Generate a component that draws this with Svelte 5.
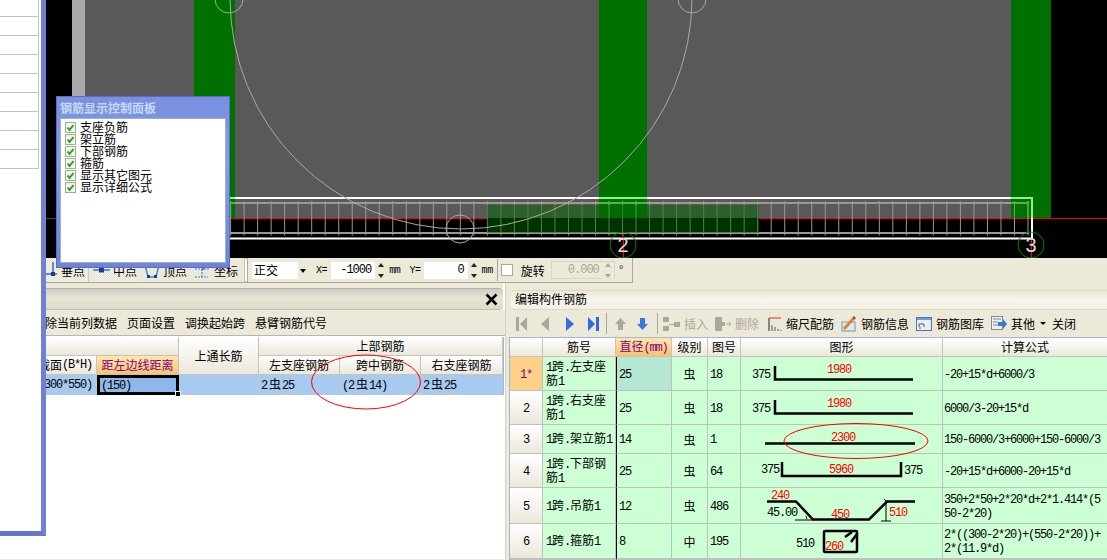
<script>
  const stirrups = Array.from({ length: 60 }, (_, i) => 230.6 + i * 13.515);
  const checks = ['支座负筋', '架立筋', '下部钢筋', '箍筋', '显示其它图元', '显示详细公式'];
  const sideRows = [17, 19, 19, 19, 19, 19, 19, 19, 19];
  const rows = [
    { k: '1*', name: '1跨.左支座筋1', d: '25', g: '虫', no: '18', f: '-20+15*d+6000/3', top: 357, h: 33 },
    { k: '2', name: '1跨.右支座筋1', d: '25', g: '虫', no: '18', f: '6000/3-20+15*d', top: 391, h: 33 },
    { k: '3', name: '1跨.架立筋1', d: '14', g: '虫', no: '1', f: '150-6000/3+6000+150-6000/3', top: 425, h: 28 },
    { k: '4', name: '1跨.下部钢筋1', d: '25', g: '虫', no: '64', f: '-20+15*d+6000-20+15*d', top: 454, h: 33 },
    { k: '5', name: '1跨.吊筋1', d: '12', g: '虫', no: '486', f: '350+2*50+2*20*d+2*1.414*(550-2*20)', top: 488, h: 35 },
    { k: '6', name: '1跨.箍筋1', d: '8', g: '中', no: '195', f: '2*((300-2*20)+(550-2*20))+2*(11.9*d)', top: 524, h: 34 }
  ];
  const runs = (s) => s.split(/([\x00-\x7f]+)/).filter(Boolean).map((text) => ({ text, latin: /^[\x00-\x7f]/.test(text) }));
</script>

{#snippet t(s)}{#each runs(s) as r}{#if r.latin}<span class="l">{r.text}</span>{:else}{r.text}{/if}{/each}{/snippet}

{#snippet figure(n)}
  {#if n === '1*' || n === '2'}
    {@const o = n === '2' ? 34 : 0}
    <polyline class="bar" points="775,{366 + o} 775,{379.5 + o} 913,{379.5 + o}" />
    <text class="lb" x="752" y={378 + o}>375</text>
    <text class="lb red" x="827" y={373 + o}>1980</text>
  {:else if n === '3'}
    <line class="bar" x1="765" y1="443.5" x2="915" y2="443.5" />
    <text class="lb red" x="831" y="441">2300</text>
  {:else if n === '4'}
    <polyline class="bar" points="782,462 782,476 901,476 901,462" />
    <text class="lb" x="761" y="473">375</text>
    <text class="lb red" x="829" y="473">5960</text>
    <text class="lb" x="904" y="474">375</text>
  {:else if n === '5'}
    <polyline class="bar" points="767,501.5 796,501.5 813,519.5 869,519.5 887,501.5 915,501.5" />
    <line class="thin" x1="795" y1="520" x2="813" y2="520" />
    <line class="thin" x1="806" y1="516" x2="807" y2="519" />
    <line class="thin" x1="886" y1="500" x2="886" y2="521" />
    <line class="thin" x1="881" y1="521" x2="891" y2="521" />
    <line class="thin" x1="884" y1="499" x2="888" y2="503" />
    <text class="lb red" x="771" y="499">240</text>
    <text class="lb" x="767" y="516">45.00</text>
    <text class="lb red" x="831" y="518">450</text>
    <text class="lb red" x="889" y="516">510</text>
  {:else}
    <rect class="bar" x="824" y="531" width="33" height="21" rx="1" />
    <line class="bar" x1="845" y1="537" x2="852" y2="532" />
    <line class="bar" x1="851" y1="542" x2="857" y2="534" />
    <text class="lb" x="796" y="547">510</text>
    <text class="lb red" x="825" y="550">260</text>
  {/if}
{/snippet}

<div class="root">
  <aside class="side">
    {#each sideRows as h}<div class="side-row" style="height:{h}px"></div>{/each}
  </aside>

  <main class="main">
    <div class="canvas-wrap">
      <svg class="canvas" viewBox="46 0 1061 258" width="1061" height="258">
        <defs>
          <clipPath id="cols">
            <rect x="230" y="0" width="5" height="218" />
            <rect x="599" y="0" width="48" height="218" />
            <rect x="1011" y="0" width="40" height="218" />
          </clipPath>
          <g id="stir">
            <line x1="230" y1="203" x2="1029" y2="203" stroke-width="2" />
            <line x1="230" y1="233" x2="1029" y2="233" stroke-width="2" />
            {#each stirrups as x}<line x1={x} y1="201" x2={x} y2="235.5" stroke-width="1" />{/each}
          </g>
          <path id="wh" d="M230 198H1032V238.5H230" fill="none" stroke-width="2" />
        </defs>
        <rect x="46" y="0" width="1061" height="258" fill="#000" />
        <rect x="72" y="0" width="13" height="218" fill="#a9a9a9" />
        <rect x="85" y="0" width="926" height="218" fill="#595959" />
        <rect x="194" y="0" width="41" height="218" fill="#007000" />
        <rect x="599" y="0" width="48" height="218" fill="#007000" />
        <rect x="1011" y="0" width="40" height="218" fill="#007000" />
        <line x1="46" y1="218.5" x2="60" y2="218.5" stroke="#007000" />
        <line x1="230" y1="218.5" x2="487" y2="218.5" stroke="#ff0000" />
        <line x1="759" y1="218.5" x2="1107" y2="218.5" stroke="#ff0000" />
        <use href="#wh" stroke="#fff" />
        <use href="#stir" stroke="#a09890" />
        <g clip-path="url(#cols)">
          <use href="#wh" stroke="#7dfc7d" />
          <use href="#stir" stroke="#5fa85f" />
        </g>
        <rect x="487" y="205" width="272" height="28" fill="#006600" opacity="0.5" />
        <g fill="none" stroke="#a8a8a8">
          <circle cx="461" cy="-2" r="231" />
          <circle cx="229" cy="-1" r="14" />
          <circle cx="692" cy="-1" r="14" />
          <circle cx="460" cy="229" r="14" />
        </g>
        <line x1="623.5" y1="235" x2="623.5" y2="258" stroke="#ff0000" />
        <line x1="1031.5" y1="240" x2="1031.5" y2="258" stroke="#ff0000" />
        <circle cx="623" cy="245" r="13" fill="none" stroke="#008000" />
        <circle cx="1031" cy="245" r="13" fill="none" stroke="#008000" />
        <text class="axis" x="623" y="252">2</text>
        <text class="axis" x="1031" y="252">3</text>
      </svg>

      <section class="float">
        <h2>钢筋显示控制面板</h2>
        <ul>
          {#each checks as c}
            <li>
              <svg width="11" height="11" viewBox="0 0 11 11"><rect x=".5" y=".5" width="10" height="10" fill="#f4f4ee" stroke="#a9a99a" /><path d="M2.5 5.5 4.5 8 8.5 3" fill="none" stroke="#1ba81b" stroke-width="2" /></svg>
              <span>{c}</span>
            </li>
          {/each}
        </ul>
      </section>
    </div>

    <div class="tools-top">
      <div class="tb">
        <div class="snap">
          <span class="tool first">
            <svg width="13" height="22" viewBox="0 0 13 22"><path d="M7 3v12M0 15h11" stroke="#2f6cc9" stroke-width="1.5" fill="none" /><rect x="5" y="13" width="4" height="4" fill="#123f9c" /></svg>
            垂点
          </span>
          <span class="tool sel">
            <svg width="17" height="22" viewBox="0 0 17 22"><path d="M0 11h17" stroke="#5b93d8" stroke-width="2" /><rect x="6" y="8.500" width="5" height="5" fill="#123f9c" /></svg>
            中点
          </span>
          <span class="tool">
            <svg width="16" height="22" viewBox="0 0 16 22"><path d="M1 6 4 18h8l3-12" fill="none" stroke="#4a86d4" stroke-width="1.500" /><rect x="3" y="16" width="3" height="3" fill="#123f9c" /><rect x="10" y="16" width="3" height="3" fill="#123f9c" /></svg>
            顶点
          </span>
          <span class="tool last">
            <svg width="16" height="22" viewBox="0 0 16 22"><path d="M1 10h14M8 4v15M1 18h13" fill="none" stroke="#2f8fd4" stroke-width="1.200" stroke-dasharray="2 1" /><path d="M8 11 14 5" stroke="#2f6cc9" stroke-width="1.500" /></svg>
            坐标
          </span>
        </div>
        <span class="grip"></span>
        <span class="select">正交<span class="drop"><i></i></span></span>
        <span class="lab x">X=</span>
        <span class="num n1">-1000</span>
        <span class="spin"><i class="up"></i><i class="dn"></i></span>
        <span class="lab">mm</span>
        <span class="lab y">Y=</span>
        <span class="num n2">0</span>
        <span class="spin"><i class="up"></i><i class="dn"></i></span>
        <span class="lab">mm</span>
        <span class="vsep"></span>
        <span class="box"></span>
        <span class="rot">旋转</span>
        <span class="dis"><span class="disn">0.000</span><span class="spin g"><i class="up"></i><i class="dn"></i></span></span>
        <span class="deg">°</span>
      </div>
    </div>

    <div class="lower">
      <section class="left">
        <div class="title-l"><svg class="close" width="13" height="13" viewBox="0 0 13 13"><path d="M1.500 1.500 11.500 11.500M11.500 1.500 1.500 11.500" stroke="#000" stroke-width="2.600" /></svg></div>
        <div class="bar-l">
          <span class="clipstart">除当前列数据</span><span>页面设置</span><span>调换起始跨</span><span>悬臂钢筋代号</span>
        </div>
        <table class="grid gl">
          <colgroup><col class="c51" /><col class="c82" /><col class="c80" /><col class="c81" /><col class="c81" /><col class="c82" /></colgroup>
          <thead>
            <tr class="h1"><th colspan="2" class="blank"></th><th rowspan="2">上通长筋</th><th colspan="3">上部钢筋</th></tr>
            <tr class="h1">
              <th><div class="end">{@render t('截面(B*H)')}</div></th>
              <th class="hot">距左边线距离</th>
              <th>左支座钢筋</th><th>跨中钢筋</th><th>右支座钢筋</th>
            </tr>
          </thead>
          <tbody>
            <tr class="sel-row">
              <td><div class="end">{@render t('(300*550)')}</div></td>
              <td class="cur">{@render t('(150)')}<i class="handle"></i></td>
              <td></td>
              <td class="pl">{@render t('2')}<span class="sym">虫</span>{@render t('25')}</td>
              <td class="pl">{@render t('(2')}<span class="sym">虫</span>{@render t('14)')}</td>
              <td class="pl">{@render t('2')}<span class="sym">虫</span>{@render t('25')}</td>
            </tr>
          </tbody>
        </table>
        <svg class="oval o1" width="112" height="58" viewBox="0 0 112 58"><ellipse cx="56" cy="29" rx="54.500" ry="27" fill="none" stroke="#ff0000" /></svg>
      </section>

      <section class="right">
        <div class="title-r">编辑构件钢筋</div>
        <div class="bar-r">
          <svg class="ic a" width="11" height="16" viewBox="0 0 11 16"><path d="M0 1h3v14H0zM11 1v14L4 8z" fill="#a8a89c" /></svg>
          <svg class="ic b" width="8" height="16" viewBox="0 0 8 16"><path d="M8 1v14L0 8z" fill="#a8a89c" /></svg>
          <svg class="ic c" width="8" height="16" viewBox="0 0 8 16"><path d="M0 1v14l8-7z" fill="#2f6ce0" /></svg>
          <svg class="ic d" width="11" height="16" viewBox="0 0 11 16"><path d="M8 1h3v14H8zM0 1v14l7-7z" fill="#2f6ce0" /></svg>
          <span class="rsep s1"></span>
          <svg class="ic e" width="11" height="12" viewBox="0 0 11 12"><path d="M5.500 0 11 6H8v6H3V6H0z" fill="#a8a89c" /></svg>
          <svg class="ic f" width="11" height="12" viewBox="0 0 11 12"><path d="M5.500 12 11 6H8V0H3v6H0z" fill="#3a78e0" /></svg>
          <span class="rsep s2"></span>
          <svg class="ic g1" width="17" height="16" viewBox="0 0 17 16"><path d="M0 1h6v5H0zM0 10h6v5H0zM6 8h5V6h6v5h-6V9H6z" fill="#aaa99c" /></svg>
          <span class="off t1">插入</span>
          <svg class="ic g2" width="17" height="16" viewBox="0 0 17 16"><path d="M0 1h7v5h3v4H7v5H0z" fill="#aaa99c" /><path d="M11 8h5M14 6l2 2-2 2" stroke="#aaa99c" fill="none" /></svg>
          <span class="off t2">删除</span>
          <svg class="ic g3" width="14" height="16" viewBox="0 0 14 16"><path d="M1 2v13" stroke="#222" /><path d="M1 2h12" stroke="#c33" /><path d="M4 15V9M7 15v-4M10 15v-2M13 15v-1" stroke="#555" /></svg>
          <span class="t3">缩尺配筋</span>
          <svg class="ic g4" width="16" height="16" viewBox="0 0 16 16"><rect x="1" y="6" width="13" height="9" fill="#dfe8f4" stroke="#7f90a8" /><path d="M3 13 12 3" stroke="#d08a30" stroke-width="3" /><path d="M12 3l2-2" stroke="#c04040" stroke-width="3" /></svg>
          <span class="t4">钢筋信息</span>
          <svg class="ic g5" width="16" height="14" viewBox="0 0 16 14"><rect x=".5" y=".5" width="15" height="13" fill="#e8eef6" stroke="#4a78b0" /><rect x="1" y="1" width="14" height="2" fill="#6f9fd0" /><path d="M3 7h5M3 7v3M8 7v3M3 11h2" stroke="#555" fill="none" /></svg>
          <span class="t4">钢筋图库</span>
          <svg class="ic g5" width="16" height="15" viewBox="0 0 16 15"><rect x=".5" y=".5" width="11" height="13" fill="#f0f0f0" stroke="#7a8aa0" /><path d="M2 3h8M2 6h5M2 9h5" stroke="#7a8aa0" /><path d="M7 6h5V3l4 5-4 5v-3H7z" fill="#3a78d8" /></svg>
          <span class="t5">其他</span>
          <i class="caret"></i>
          <span class="t6">关闭</span>
        </div>

        <table class="grid gr">
          <colgroup><col class="r33" /><col class="r73" /><col class="r56" /><col class="r36" /><col class="r33w" /><col class="r201" /><col class="r165" /></colgroup>
          <thead>
            <tr class="h2">
              <th></th><th>筋号</th><th class="hot">直径{@render t('(mm)')}</th><th>级别</th><th>图号</th><th>图形</th><th>计算公式</th>
            </tr>
          </thead>
          <tbody>
            {#each rows as r, i}
              <tr style="height:{r.h + 1}px">
                <td class="rh" class:rh-on={i === 0}>{@render t(r.k)}</td>
                <td class="nm">{@render t(r.name)}</td>
                <td class="dm" class:dm-on={i === 0}>{@render t(r.d)}</td>
                <td class="ct">{r.g}</td>
                <td class="pl">{@render t(r.no)}</td>
                <td class="fg"><svg width="200" height={r.h} viewBox="741 {r.top} 200 {r.h}">{@render figure(r.k)}</svg></td>
                <td class="fm">{@render t(r.f)}</td>
              </tr>
            {/each}
            <tr><td class="rh"></td><td class="nm"></td><td class="dm"></td><td></td><td></td><td></td><td></td></tr>
          </tbody>
        </table>
        <svg class="oval o2" width="148" height="38" viewBox="0 0 148 38"><ellipse cx="74" cy="19" rx="72" ry="17.500" fill="none" stroke="#ff0000" /></svg>
      </section>
    </div>
  </main>
</div>

<style>
  :global(body) { margin: 0; }
  .root {
    display: flex; width: 1107px; height: 560px; overflow: hidden; color: #000;
    background: linear-gradient(#fff 559px, #ece9d8 0);
    font: 12px/13px "Noto Sans CJK SC", "Liberation Sans", sans-serif;
  }
  .l { font-family: "Liberation Mono", monospace; letter-spacing: -1.2px; }

  .side { box-sizing: border-box; width: 46px; height: 536px; flex: none; background: #fff; border-right: 5px solid #6f80d6; border-bottom: 5px solid #6677cf; }
  .side-row { box-sizing: border-box; width: 39px; background: #fff; border-right: 1px solid #c4c4bc; border-bottom: 1px solid #c4c4bc; }

  .main { display: flex; flex-direction: column; width: 1061px; flex: none; }
  .canvas-wrap { position: relative; height: 258px; flex: none; }
  .canvas { display: block; }
  .axis { fill: #dcdcdc; font: 20px "Liberation Sans", sans-serif; text-anchor: middle; }

  .float {
    position: absolute; left: 10px; top: 96px; box-sizing: border-box; width: 174px; height: 172px; padding: 0 3px 4px;
    display: flex; flex-direction: column; border: 1px solid #5a6cc8;
    background: linear-gradient(#7b8fe0, #7f9fe6 40%, #7083d8);
  }
  .float h2 { margin: 0; height: 21px; line-height: 22px; font-size: 12px; font-weight: bold; color: #c9d8f7; flex: none; }
  .float ul { list-style: none; flex: 1; margin: 0; padding: 2px 0 0 4px; background: #fff; border: 1px solid #9fb0c6; }
  .float li { display: flex; align-items: center; gap: 4px; height: 12px; line-height: 12px; }
  .float li svg { flex: none; }

  .tools-top { height: 25px; flex: none; background: #ece9d8; }
  .tb {
    display: flex; align-items: center; box-sizing: border-box; width: 587px; height: 25px;
    border-bottom: 1px solid #aca899; border-right: 1px solid #aca899; background: #ece9d8;
  }
  .snap { display: flex; align-items: center; height: 24px; width: 193px; flex: none; }
  .tool { display: flex; align-items: center; gap: 3px; margin-right: 7px; flex: none; white-space: nowrap; }
  .tool.first { gap: 2px; padding-right: 3px; margin-right: 4px; height: 24px; border-right: 1px solid #cfccbb; box-sizing: border-box; width: 43px; background: repeating-conic-gradient(#f5f4ec 0 25%, #e6e3d2 0 50%) 0 0 / 2px 2px; }
  .tool.sel { height: 24px; background: repeating-conic-gradient(#f5f4ec 0 25%, #e6e3d2 0 50%) 0 0 / 2px 2px; }
  .tool.last { gap: 4px; margin-right: 0; }
  .grip { width: 2px; height: 22px; margin: 0 4px 0 5px; border: 1px solid #c5c2b0; border-right-color: #aca899; flex: none; background: #fff; box-sizing: content-box; }
  .select { position: relative; box-sizing: border-box; display: block; width: 55px; height: 17px; padding-left: 2px; line-height: 16px; background: #fff; flex: none; }
  .drop { position: absolute; right: 0; top: 0; width: 9px; height: 17px; background: #ece9d8; }
  .drop i { position: absolute; left: 2px; top: 7px; border: 3px solid transparent; border-top: 4px solid #000; border-bottom: 0; }
  .lab { font: 10px/17px "Liberation Mono", monospace; letter-spacing: -.4px; flex: none; margin-left: 2px; }
  .x { margin-left: 9px; margin-right: 4px; }
  .y { margin-left: 9px; margin-right: 3px; }
  .num { box-sizing: border-box; display: block; height: 17px; padding-right: 4px; background: #fff; text-align: right; font: 12px/16px "Liberation Mono", monospace; letter-spacing: -1px; flex: none; }
  .n1 { width: 44px; }
  .n2 { width: 44px; }
  .spin { position: relative; width: 12px; height: 17px; background: #ece9d8; flex: none; display: block; }
  .spin i { position: absolute; left: 3px; border: 3px solid transparent; }
  .spin .up { top: 1px; border-top: 0; border-bottom: 4px solid #222; }
  .spin .dn { bottom: 1px; border-bottom: 0; border-top: 4px solid #222; }
  .spin.g .up { border-bottom-color: #aca899; }
  .spin.g .dn { border-top-color: #aca899; }
  .vsep { width: 1px; height: 22px; background: #aca899; margin: 0 3px 0 4px; flex: none; }
  .box { box-sizing: border-box; width: 12px; height: 12px; background: #fff; border: 1px solid #aca899; flex: none; }
  .rot { margin: 0 6px 0 8px; flex: none; }
  .dis { display: flex; align-items: center; box-sizing: border-box; width: 64px; height: 18px; border: 1px solid #d8d5c4; flex: none; }
  .disn { flex: 1; text-align: right; padding-right: 3px; font: 12px/16px "Liberation Mono", monospace; letter-spacing: -1px; color: #aca899; }
  .deg { margin-left: 4px; font: 12px/12px "Liberation Sans", sans-serif; color: #333; }

  .lower { position: relative; display: flex; flex: 1; min-height: 0; background: #ece9d8; }
  .left { position: relative; box-sizing: border-box; width: 459px; height: 277px; flex: none; background: #fff; border-right: 2px solid #fff; border-bottom: 1px solid #ece9d8; }
  .left::before { content: ""; display: block; height: 5px; background: #ece9d8; }
  .title-l {
    position: relative; box-sizing: border-box; width: 457px; height: 22px;
    background: linear-gradient(#cfcdc6, #e7e4d6 45%, #dedbca); border-top: 1px solid #b5b2a5; border-bottom: 1px solid #c2c0b3; border-radius: 0 4px 4px 0;
  }
  .close { position: absolute; right: 5px; top: 4px; }
  .bar-l { box-sizing: border-box; display: flex; gap: 10px; height: 26px; padding-top: 6px; width: 459px; overflow: hidden; background: #ece9d8; border-bottom: 1px solid #b3b6bb; white-space: nowrap; }
  .clipstart { margin-left: -1px; }
  .grid { table-layout: fixed; border-collapse: separate; border-spacing: 0; }
  .gl { width: 457px; margin-top: 1px; border-right: 1px solid #9fb8d8; }
  .c51 { width: 51px; } .c82 { width: 82px; } .c80 { width: 80px; } .c81 { width: 81px; }
  th { padding: 0; font-weight: normal; overflow: hidden; white-space: nowrap; box-sizing: border-box; border-right: 1px solid #c8c5b8; border-bottom: 1px solid #c8c5b8; background: linear-gradient(#fff, #ebe8da); }
  td { padding: 0; box-sizing: border-box; border-right: 1px solid #c0c0c0; border-bottom: 1px solid #c0c0c0; overflow: hidden; }
  .h1 { height: 19px; line-height: 12px; }
  .blank { border-right: 1px solid #c8c5b8; }
  th.hot { background: linear-gradient(#fce6b0, #f6c272); color: #800080; }
  .end { display: flex; justify-content: flex-end; white-space: nowrap; padding-right: 4px; }
  .sel-row { height: 20px; line-height: 12px; background: #a6caf0; }
  .sel-row td { border-color: #bcc8d4; }
  .pl { padding-left: 2px; white-space: nowrap; }
  .sym { margin: 0 1px 0 2px; }
  td.cur { position: relative; overflow: visible; box-sizing: border-box; height: 20px; padding-left: 1px; background: #8fb8ea; border: 3px solid #000; }
  .handle { position: absolute; right: -5px; bottom: -5px; width: 4px; height: 4px; background: #000; border: 1px solid #fff; }
  .oval { position: absolute; pointer-events: none; }
  .o1 { left: 264px; top: 70px; }

  .right { position: relative; flex: 1; min-width: 0; box-sizing: border-box; padding-left: 1px; background: #ece9d8; border-left: 1px solid #d6d3c2; }
  .title-r {
    box-sizing: border-box; height: 20px; margin: 7px 0 0 4px; padding: 1px 0 0 4px;
    background: linear-gradient(#ece9d8, #f8f6ee 50%, #f2efe2); border-radius: 4px 0 0 4px; border-top: 1px solid #ddd9c6; border-bottom: 1px solid #ddd9c6;
  }
  .bar-r { display: flex; align-items: center; height: 27px; box-sizing: border-box; white-space: nowrap; padding-left: 9px; }
  .ic { flex: none; }
  .b { margin-left: 14px; } .c { margin-left: 17px; } .d { margin-left: 14px; }
  .rsep { width: 1px; height: 21px; background: #aca899; flex: none; }
  .s1 { margin-left: 7px; } .e { margin-left: 8px; } .f { margin-left: 11px; }
  .s2 { margin-left: 9px; } .g1 { margin-left: 5px; }
  .off { color: #aca899; margin-left: 4px; }
  .t2 { margin-left: 3px; }
  .g2 { margin-left: 7px; }
  .g3 { margin-left: 9px; }
  .t3 { margin-left: 4px; }
  .g4 { margin-left: 7px; }
  .t4 { margin-left: 4px; }
  .g5 { margin-left: 7px; }
  .t5 { margin-left: 4px; }
  .caret { margin-left: 5px; border: 3px solid transparent; border-top: 3px solid #000; border-bottom: 0; }
  .t6 { margin-left: 6px; }

  .gr { width: 599px; margin-left: 2px; border-top: 1px solid #9fb8d8; border-left: 1px solid #9fb8d8; }
  .r33 { width: 33px; } .r73 { width: 73px; } .r56 { width: 56px; } .r36 { width: 36px; } .r33w { width: 33px; } .r201 { width: 202px; } .r165 { width: 165px; }
  .h2 { height: 19px; line-height: 12px; }
  .gr tbody tr { background: #ccffd4; }
  .rh { text-align: center; background: linear-gradient(#fff, #ebe8da); }
  .rh-on { background: #fdd188; color: #800080; }
  .nm { padding-left: 3px; line-height: 12px; }
  .dm { padding-left: 2px; border-left: 1px solid #000; }
  .dm-on { background: #b4e8d2; }
  .ct { text-align: center; }
  .fg { line-height: 0; }
  .fm { padding: 0 6px 0 1px; line-height: 12px; word-break: break-all; }
  .lb { font: 12px "Liberation Mono", monospace; letter-spacing: -1.2px; fill: #000; }
  .red { fill: #ff0000; }
  .bar { fill: none; stroke: #000; stroke-width: 2.500; }
  .thin { stroke: #000; stroke-width: 1; }
  .o2 { left: 276px; top: 139px; }
</style>
